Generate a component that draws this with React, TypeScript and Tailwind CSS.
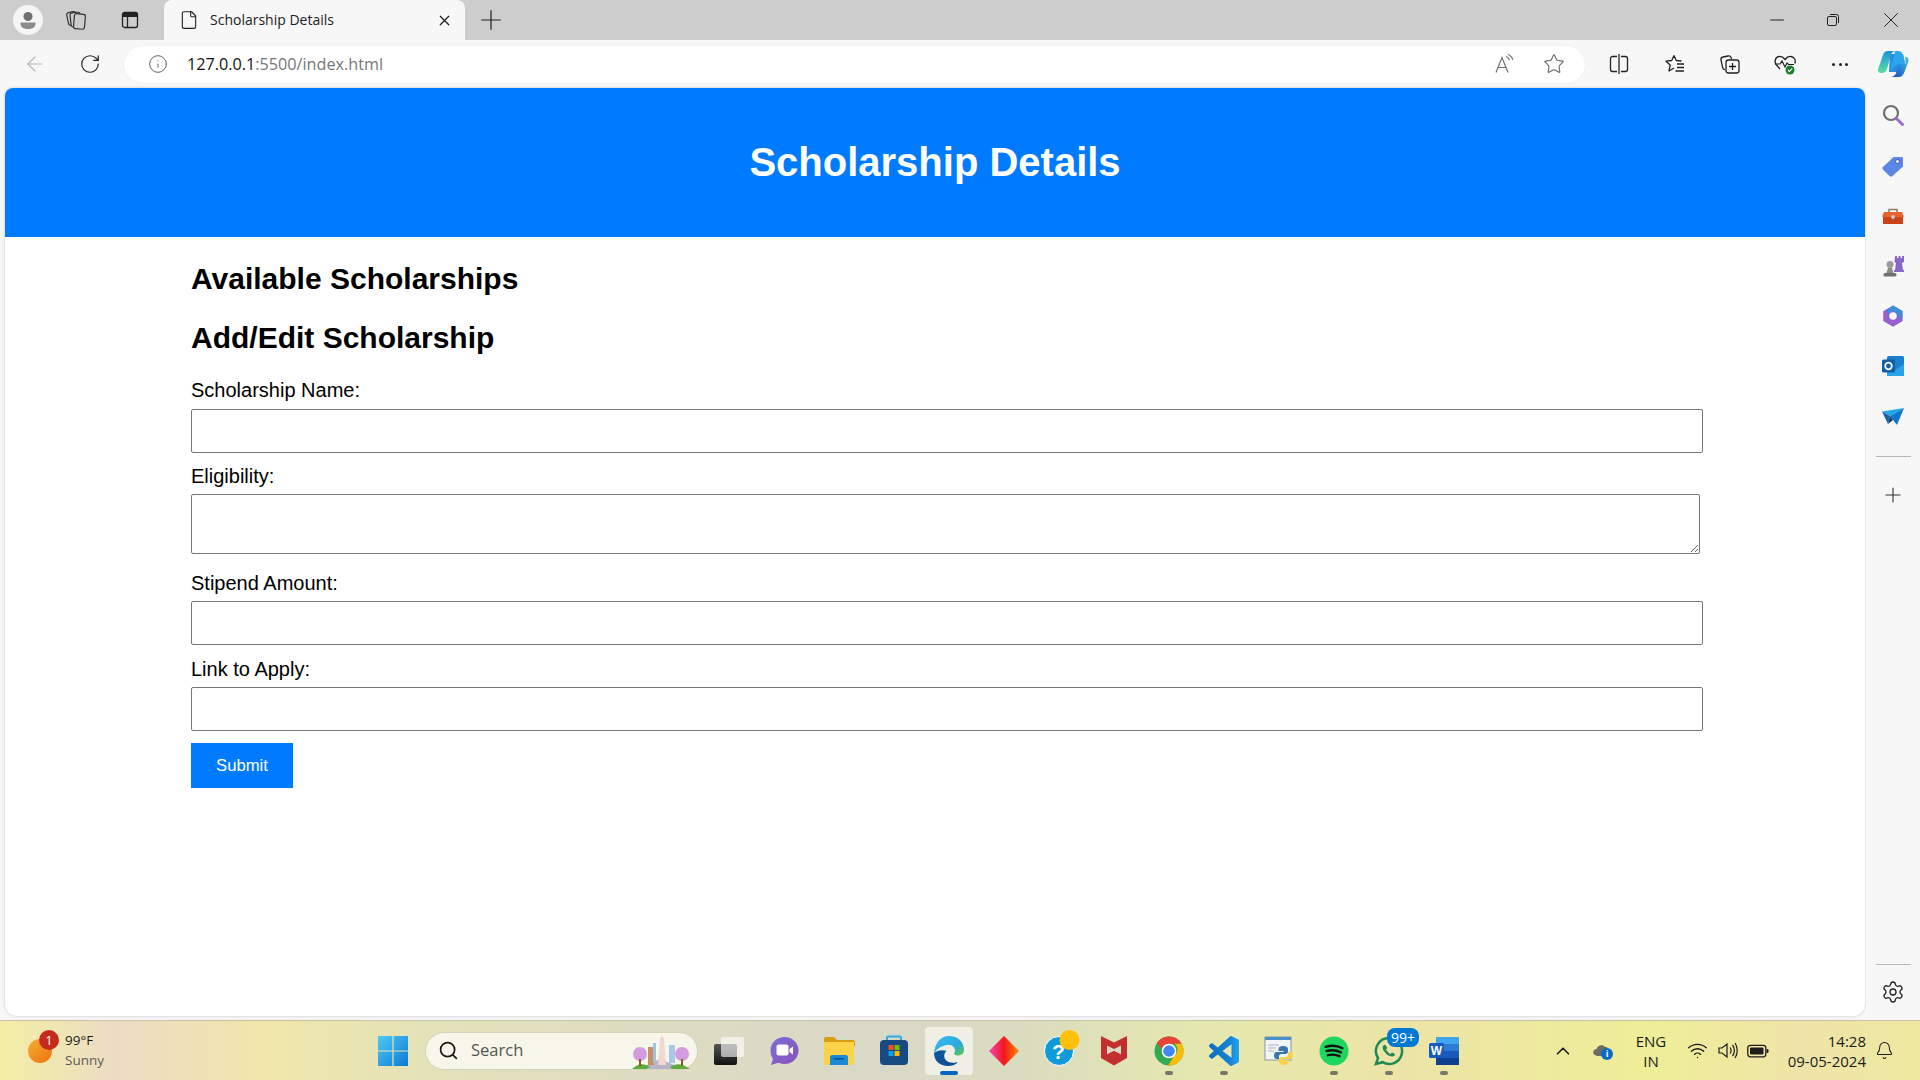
import React from "react";
import { ArrowLeft, RotateCw, Info, Star, X, Plus, Minus, File, Settings, ChevronUp, Bell, Wifi, Search } from "lucide-react";

const chrome = "font-['Open_Sans','Noto_Sans',sans-serif]";

function Profile() {
  return (
    <div className="w-[30px] h-[30px] rounded-full bg-[#f5f5f5] flex items-center justify-center">
      <svg width="22" height="22" viewBox="0 0 22 22"><circle cx="11" cy="7.5" r="4.5" fill="#6f6f6f" /><path d="M3.5 13.5h15v1.5c0 3-3.5 5-7.500 5s-7.500-2-7.500-5z" fill="#8b8b8b" /></svg>
    </div>
  );
}

function Workspaces() {
  return (
    <svg width="22" height="22" viewBox="0 0 22 22" fill="none" stroke="#333" strokeWidth="1.2"><rect x="1.500" y="3" width="9" height="13" rx="2" fill="#ccc" transform="rotate(-12 6 9)" /><rect x="4.500" y="3.500" width="10" height="14" rx="2" transform="rotate(-6 10 10)" fill="#ccc" /><rect x="8" y="5" width="11" height="15" rx="2" transform="rotate(5 14 12)" fill="#ccc" /></svg>
  );
}

function VerticalTabs() {
  return (
    <svg width="20" height="20" viewBox="0 0 20 20" fill="none"><rect x="2.500" y="2.500" width="15" height="15" rx="2" stroke="#222" strokeWidth="1.300" /><path d="M2.500 3h15v4h-15z" fill="#222" /><path d="M7.500 7v10" stroke="#222" strokeWidth="1.300" /></svg>
  );
}

function Restore() {
  return (
    <svg width="14" height="14" viewBox="0 0 14 14" fill="none" stroke="#222" strokeWidth="1"><rect x="1.500" y="3.500" width="9" height="9" rx="1.500" /><path d="M4 1.500h6.500a2 2 0 0 1 2 2V10" /></svg>
  );
}

function ReadAloud() {
  return (
    <svg width="22" height="22" viewBox="0 0 22 22" fill="none" stroke="#707070" strokeWidth="1.200"><path d="M2 19.500 8 4.500l6 15M4.200 14.500h7.600" /><path d="M12 3.500c2 .7 3 1.800 3.500 3.500M14 1.500c2.700 1 4.200 2.700 4.800 5.300" /></svg>
  );
}

function SplitScreen() {
  return (
    <svg width="22" height="22" viewBox="0 0 22 22" fill="none" stroke="#222" strokeWidth="1.300"><path d="M9 3.500H4.500a2 2 0 0 0-2 2v11a2 2 0 0 0 2 2H9M13 3.500h4.500a2 2 0 0 1 2 2v11a2 2 0 0 1-2 2H13M11 1v20" /></svg>
  );
}

function Favorites() {
  return (
    <svg width="22" height="22" viewBox="0 0 22 22" fill="none" stroke="#222" strokeWidth="1.300" strokeLinejoin="round"><path d="M10 2.500l2.300 5 5.200.5M10 2.500l-2.300 5-5.700.7 4.200 3.800-1.200 6 5-3" /><path d="M13 11h7M13 14.500h7M11.500 18h8.500" /></svg>
  );
}

function Collections() {
  return (
    <svg width="22" height="22" viewBox="0 0 22 22" fill="none" stroke="#222" strokeWidth="1.300"><path d="M6 16.500c-1 0-2-.5-2.300-1.700L2 7c-.3-1.500.5-2.700 2-3l5-1c1.500-.3 2.700.4 3.200 1.800l.3 1.200" /><rect x="7" y="7" width="13" height="13" rx="2.500" /><path d="M13.500 10v7M10 13.500h7" /></svg>
  );
}

function Health() {
  return (
    <svg width="24" height="24" viewBox="0 0 24 24" fill="none"><path d="M7 17 3.500 13C1 10 2 5 6 4.500c2.500-.3 4.500 1 6 3 1.500-2 3.500-3.300 6-3 3.500.5 5 4 3.800 7" stroke="#222" strokeWidth="1.300" /><path d="M2 12h5l2-3 3 6 2-4 1.500 1.500H21" stroke="#222" strokeWidth="1.200" /><circle cx="17" cy="18" r="4.500" fill="#1a7f2d" /><path d="M15 18l1.500 1.500 2.600-2.800" stroke="#fff" strokeWidth="1.200" /></svg>
  );
}

function Copilot() {
  return (
    <svg width="32" height="32" viewBox="0 0 32 32">
      <defs>
        <linearGradient id="cp1" x1="0" y1="0" x2="0" y2="1"><stop offset="0" stopColor="#1b8fe0" /><stop offset="1" stopColor="#5be0a0" /></linearGradient>
        <linearGradient id="cp3" x1="1" y1="0" x2="0" y2="1"><stop offset="0" stopColor="#3ec0f0" /><stop offset="1" stopColor="#1746b8" /></linearGradient>
      </defs>
      <path d="M13 6h13l2 10-4 8H12z" fill="#2a8ae0" />
      <path d="M11 3h8c-3 0-4.500 2-5 4L10 21c-.7 2.500-2.500 4-5 4H4c-2 0-3.500-1.500-3-3.500L6 7c.7-2.500 2.500-4 5-4z" fill="url(#cp1)" />
      <path d="M18 3h3c2.500 0 4 1.500 5 4l2 8c.3 1.500-1 1.500-2 1.500h-4c-3 0-5 1-6 4l-2 4c-.5-3 0-7 1.500-11l2-7c.3-1.500 0-2.500.5-3.500z" fill="#2aa6ec" />
      <path d="M28 9c2.500 0 4 1.500 3.500 4L27 25c-.8 2-2.500 4-5 4h-9c3 0 5-1.500 6-4l2-5c.5-2 2-3 4-3h1c2 0 3-1 2.500-4z" fill="url(#cp3)" />
    </svg>
  );
}

function Tab() {
  return (
    <div className="w-[301px] h-[40px] bg-[#f7f7f7] rounded-t-lg flex items-center pl-[15px] pr-[12px]">
      <File size={20} strokeWidth={1.300} className="text-[#222]" />
      <span className={`${chrome} ml-[11px] mb-[1px] text-[14px] text-[#222] flex-1`}>Scholarship Details</span>
      <X size={17} strokeWidth={1.800} className="text-[#222]" />
    </div>
  );
}

function TabStrip() {
  return (
    <div className="h-[40px] bg-[#cdcdcd] flex items-center">
      <div className="ml-[13px] w-[30px] flex justify-center"><Profile /></div>
      <div className="ml-[23px] w-[22px] flex"><Workspaces /></div>
      <div className="ml-[32px] w-[20px] flex"><VerticalTabs /></div>
      <div className="ml-[24px]"><Tab /></div>
      <Plus size={32} strokeWidth={0.900} className="ml-[10px] text-[#222]" />
      <div className="flex-1" />
      <Minus size={22} strokeWidth={1.100} className="text-[#222]" />
      <div className="ml-[38px] flex"><Restore /></div>
      <X size={26} strokeWidth={0.900} className="ml-[38px] mr-[16px] text-[#222]" />
    </div>
  );
}

function AddressBar() {
  return (
    <div className="h-[48px] bg-[#f7f7f7] flex items-center">
      <ArrowLeft size={24} strokeWidth={1.100} className="ml-[23px] text-[#b5b5b5]" />
      <RotateCw size={22} strokeWidth={1.300} className="ml-[32px] text-[#222]" />
      <div className="ml-[23px] w-[1461px] h-[37px] rounded-full bg-white flex items-center shadow-[0_0_2px_rgba(0,0,0,0.08)]">
        <Info size={20} strokeWidth={1.100} className="ml-[24px] text-[#555]" />
        <span className={`${chrome} ml-[19px] text-[16.200px] text-[#777]`}><span className="text-[#111]">127.0.0.1</span>:5500/index.html</span>
        <div className="flex-1" />
        <ReadAloud />
        <Star size={22} strokeWidth={1.200} className="ml-[27px] mr-[20px] text-[#666]" />
      </div>
      <div className="ml-[23px] flex"><SplitScreen /></div>
      <div className="ml-[34px] flex"><Favorites /></div>
      <div className="ml-[33px] flex"><Collections /></div>
      <div className="ml-[32px] flex"><Health /></div>
      <div className="ml-[35px] flex gap-[3.500px]">
        <span className="w-[3px] h-[3px] rounded-full bg-[#222]" /><span className="w-[3px] h-[3px] rounded-full bg-[#222]" /><span className="w-[3px] h-[3px] rounded-full bg-[#222]" />
      </div>
      <div className="ml-[29px] flex"><Copilot /></div>
    </div>
  );
}

function Field({ label, tall, labelGap, bottom }: { label: string; tall?: boolean; labelGap: string; bottom: string }) {
  return (
    <div className={bottom}>
      <label className={`block text-[20px] leading-[23px] text-black ${labelGap}`}>{label}</label>
      {tall ? (
        <textarea className="block w-[1509px] h-[60px] border-[1.500px] border-[#767676] rounded-[2px] bg-white resize-y" />
      ) : (
        <input type="text" className="block w-[1512px] h-[44px] border-[1.500px] border-[#767676] rounded-[2px] bg-white" />
      )}
    </div>
  );
}

function Page() {
  return (
    <div className="w-[1860px] h-[928px] ml-[5px] bg-white rounded-t-lg rounded-b-xl overflow-hidden font-['Liberation_Sans',Arial,sans-serif] shadow-[0_0_3px_rgba(0,0,0,0.2)]">
      <header className="h-[149px] bg-[#007bff] flex items-center justify-center pb-[1px]">
        <h1 className="text-[40px] font-bold text-white">Scholarship Details</h1>
      </header>
      <main className="pl-[186px] pt-[25px]">
        <h2 className="text-[30px] leading-[34px] font-bold text-black mb-[25px]">Available Scholarships</h2>
        <h2 className="text-[30px] leading-[34px] font-bold text-black mb-[24px]">Add/Edit Scholarship</h2>
        <Field label="Scholarship Name:" labelGap="mb-[7px]" bottom="mb-[12px]" />
        <Field label="Eligibility:" tall labelGap="mb-[6px]" bottom="mb-[18px]" />
        <Field label="Stipend Amount:" labelGap="mb-[6px]" bottom="mb-[13px]" />
        <Field label="Link to Apply:" labelGap="mb-[6px]" bottom="mb-[12px]" />
        <button className="w-[102px] h-[45px] bg-[#007bff] text-white text-[16.670px] block">Submit</button>
      </main>
    </div>
  );
}

function Tag() {
  return (<svg width="24" height="24" viewBox="0 0 24 24"><path d="M2 13 12.500 3h8c1 0 1.500.5 1.500 1.500v8L11.500 22c-1 1-2 1-3 0L2 15.500c-.7-.8-.7-1.700 0-2.500z" fill="#5b86e5" /><circle cx="16.500" cy="7.500" r="2" fill="#fff" stroke="#3552b0" /></svg>);
}
function Toolbox() {
  return (<svg width="24" height="24" viewBox="0 0 24 24"><path d="M8 7V4.500h8V7" fill="none" stroke="#8a7a70" strokeWidth="1.500" /><path d="M3 7h18l2 5H1z" fill="#e8622c" /><path d="M2 12h20v7H2z" fill="#c9431a" /><circle cx="12" cy="12" r="2" fill="#c8c8c8" /></svg>);
}
function Chess() {
  return (<svg width="24" height="24" viewBox="0 0 24 24"><circle cx="9" cy="10.500" r="3.500" fill="#9a9a9a" /><path d="M7 14h4l1.500 5h-7z" fill="#8a8a8a" /><rect x="2.500" y="19" width="13" height="3.500" rx="1.500" fill="#707070" /><path d="M14 2h2v2h1.500V2h2v2H21V2h2v6l-2 1 1 7h1v2H13v-2h1l1-7-1.500-1z" fill="#8a66c8" /></svg>);
}
function M365() {
  return (<svg width="24" height="24" viewBox="0 0 24 24"><path d="M12 1.500 21.500 7v10L12 22.500 2.500 17V7z" fill="#7a68d8" /><path d="M12 1.500 21.500 7v7l-5-3c-.5-2.500-2-3.500-4.500-3.500L7 10V5z" fill="#3f8fd8" /><path d="M2.500 7v10L12 22.500 21.500 17l-5-3-4.500 2.500L7 14V8z" fill="#9a5fd0" /><circle cx="12" cy="12" r="3.800" fill="#f7f7f7" /></svg>);
}
function Outlook() {
  return (<svg width="24" height="24" viewBox="0 0 24 24"><rect x="6" y="2" width="17" height="20" rx="1.500" fill="#1a7fd0" /><path d="M6 10l8.500 6L23 10v12H6z" fill="#2aa4e8" /><rect x="1" y="5.500" width="13" height="13" rx="1.500" fill="#0f5fa8" /><circle cx="7.500" cy="12" r="3.300" fill="none" stroke="#fff" strokeWidth="1.800" /></svg>);
}
function Send() {
  return (<svg width="24" height="24" viewBox="0 0 24 24"><path d="M1 6.500 23 3 9 11z" fill="#22a8ea" /><path d="M23 3 16 20 9 11z" fill="#1078c8" /><path d="M9 11l-2 8 5-4z" fill="#103a70" /><path d="M1 6.500 9 11l-2 8z" fill="#1560a8" /></svg>);
}

function Sidebar() {
  return (
    <div className="w-[54px] h-[928px] ml-[1px] flex flex-col items-center bg-[#f7f7f7]">
      <svg className="mt-[15px]" width="24" height="24" viewBox="0 0 24 24" fill="none"><circle cx="10" cy="10" r="7" stroke="#707070" strokeWidth="2.200" /><path d="M15.500 15.500l6 6" stroke="#9a6bd0" strokeWidth="3" strokeLinecap="round" /></svg>
      <div className="mt-[27px] flex"><Tag /></div>
      <div className="mt-[27px] flex"><Toolbox /></div>
      <div className="mt-[25px] flex"><Chess /></div>
      <div className="mt-[26px] flex"><M365 /></div>
      <div className="mt-[26px] flex"><Outlook /></div>
      <div className="mt-[27px] flex"><Send /></div>
      <div className="mt-[27px] w-[35px] h-px bg-[#b8b8b8]" />
      <Plus size={24} strokeWidth={1.100} className="mt-[26px] text-[#333]" />
      <div className="flex-1" />
      <div className="w-[35px] h-px bg-[#b8b8b8]" />
      <Settings size={24} strokeWidth={1.300} className="mt-[15px] mb-[12px] text-[#222]" />
    </div>
  );
}

function WinLogo() {
  return (
    <svg width="30" height="30" viewBox="0 0 30 30">
      <defs><linearGradient id="wl" x1="0" y1="0" x2="1" y2="1"><stop offset="0" stopColor="#4fcbf5" /><stop offset="1" stopColor="#0a78d4" /></linearGradient></defs>
      <path d="M0 0h14.400v14.400H0zM15.600 0H30v14.400H15.600zM0 15.600h14.400V30H0zM15.600 15.600H30V30H15.600z" fill="url(#wl)" />
    </svg>
  );
}

function City() {
  return (
    <svg width="62" height="34" viewBox="0 0 62 34">
      <path d="M8 34 L30 24 L54 34z" fill="#b8b4c8" />
      <path d="M2 34c6-6 12-6 18-2l-4 2zM40 32c6-4 12-4 20 2H42z" fill="#5eaa3c" />
      <path d="M28 30 30 4l2-4 2 4 2 26z" fill="#f0d8d0" />
      <rect x="18" y="12" width="6" height="18" fill="#c89060" /><rect x="23" y="8" width="3" height="20" fill="#9fc0e0" /><rect x="39" y="10" width="6" height="18" fill="#a8c8e8" />
      <circle cx="10" cy="19" r="7" fill="#d49be0" /><circle cx="52" cy="19" r="7" fill="#d49be0" />
      <rect x="9" y="24" width="2" height="7" fill="#8a5a20" /><rect x="51" y="24" width="2" height="7" fill="#8a5a20" />
    </svg>
  );
}

function TaskIcon({ children, active, dot }: { children: React.ReactNode; active?: boolean; dot?: boolean }) {
  return (
    <div className={`relative w-[48px] h-[48px] mr-[7px] flex items-center justify-center rounded-[4px] ${active ? "bg-[#f0efe6]" : ""}`}>
      {children}
      {active && <span className="absolute bottom-0 left-[15px] w-[18px] h-[4px] rounded-full bg-[#0067c0]" />}
      {dot && <span className="absolute bottom-0 left-[20px] w-[8px] h-[4px] rounded-full bg-[#77776a]" />}
    </div>
  );
}

const TaskView = () => (
  <svg width="32" height="30" viewBox="0 0 32 30">
    <defs><linearGradient id="tv" x1="0" y1="0" x2="0" y2="1"><stop offset="0" stopColor="#555" /><stop offset="1" stopColor="#111" /></linearGradient></defs>
    <rect x="1" y="8" width="23" height="21" rx="2" fill="url(#tv)" />
    <rect x="8" y="1" width="23" height="20" rx="2" fill="#ffffff" fillOpacity="0.62" />
  </svg>
);
const Teams = () => (<svg width="30" height="30" viewBox="0 0 30 30"><defs><linearGradient id="tm" x1="0" y1="0" x2="1" y2="1"><stop offset="0" stopColor="#7b6fd8" /><stop offset="1" stopColor="#8a50b8" /></linearGradient></defs><path d="M15.500 1C23.500 1 29.500 7 29.500 14.500S23.500 28 15.500 28c-2 0-4-.4-6-1.300L2 29l2-6C2.500 20.500 1.500 17.500 1.500 14.500 1.500 7 7.500 1 15.500 1z" fill="url(#tm)" /><rect x="7.500" y="8.500" width="12" height="11" rx="2" fill="#fff" /><path d="M20.500 13l3.500-2.500v8L20.500 16z" fill="#fff" /></svg>);
const Folder = () => (<svg width="32" height="30" viewBox="0 0 32 30"><path d="M1 3c0-1 .8-2 2-2h8l3 3h16c1 0 2 .8 2 2v4H1z" fill="#d89c10" /><path d="M1 6h30v21c0 1-1 2-2 2H3c-1 0-2-1-2-2z" fill="#fbd248" /><path d="M7 21c0-1 1-2 2-2h14c1 0 2 1 2 2v8H7z" fill="#1a8ad8" /><rect x="11" y="22" width="10" height="1.500" fill="#0a4f90" /></svg>);
const Store = () => (<svg width="30" height="31" viewBox="0 0 30 31"><path d="M8 7V3c0-1 .8-1.500 1.500-1.500h11c.7 0 1.500.5 1.500 1.500v4" fill="none" stroke="#2aa8e8" strokeWidth="2" /><rect x="1" y="5" width="28" height="25" rx="4" fill="#164a80" /><path d="M9.500 10H14.500v5H9.500z" fill="#f25022" /><path d="M15.500 10h5v5h-5z" fill="#7fba00" /><path d="M9.500 16h5v5h-5z" fill="#00a4ef" /><path d="M15.500 16h5v5h-5z" fill="#ffb900" /></svg>);
const Edge = () => (<svg width="32" height="32" viewBox="0 0 32 32"><defs><linearGradient id="eg" x1="0" y1="0" x2="1" y2="1"><stop offset="0" stopColor="#35c1f1" /><stop offset=".6" stopColor="#2aa8e0" /><stop offset="1" stopColor="#5ec93a" /></linearGradient><linearGradient id="eb" x1="0" y1="0" x2="1" y2="1"><stop offset="0" stopColor="#0c59a4" /><stop offset="1" stopColor="#114a8b" /></linearGradient></defs><path d="M16 1c9 0 15 6 15 14 0 3-1.500 5-5 5.500-3 .3-5.500-1-4.500-3 .5-1.200 1-3-.5-5-1.500-2-4-3-7-2.500C7 11 2.500 15 1 19 1.500 9 7 1 16 1z" fill="url(#eg)" /><path d="M1 18c0 8 6 13 14 13 4 0 7-1 9-3 .7-.7.3-1-.5-.7-4 1.200-9 .4-11-2.500-2-3-1.500-6.800 1-9-6-2-11 1-12.500 2.200z" fill="url(#eb)" /></svg>);
const Diamond = () => (<svg width="30" height="30" viewBox="0 0 30 30"><defs><linearGradient id="dm" x1="0" y1="0" x2="1" y2="0"><stop offset="0" stopColor="#f04bb0" /><stop offset=".5" stopColor="#f5141e" /><stop offset="1" stopColor="#ff8a00" /></linearGradient></defs><path d="M15 0 30 15 15 30 0 15z" fill="url(#dm)" /></svg>);
const HelpIcon = () => (
  <div className="relative w-[30px] h-[30px]">
    <svg className="absolute inset-0 overflow-visible" width="30" height="30" viewBox="0 0 30 30">
      <circle cx="15" cy="15" r="14.500" fill="#0f9ad8" stroke="#fff" strokeWidth="1" />
      <text x="14.500" y="23" textAnchor="middle" fontFamily="Liberation Sans" fontWeight="700" fontSize="21" fill="#fff">?</text>
      <circle cx="25.500" cy="4" r="10" fill="#ffc107" />
    </svg>
  </div>
);
const McAfee = () => (<svg width="28" height="31" viewBox="0 0 28 31"><path d="M1 1l13 6.500L27 1v22l-13 7.500L1 23z" fill="#c1302e" /><path d="M7 10.500l7 3.500 7-3.500v9l-7-3.500-7 3.500z" fill="#d9d8c6" /><path d="M7 19.500l7-3.500 7 3.500-7 4z" fill="#c1302e" /></svg>);
const Chrome = () => (<svg width="30" height="30" viewBox="0 0 32 32"><circle cx="16" cy="16" r="15.500" fill="#34a853" /><path d="M16 .5a15.500 15.500 0 0 1 13.500 7.800H16a7.800 7.800 0 0 0-7.300 5.200L3 7.500A15.500 15.500 0 0 1 16 .5z" fill="#ea4335" /><path d="M29.500 8.300A15.500 15.500 0 0 1 15 31.500l6.500-10.500a7.800 7.800 0 0 0 .5-12.700z" fill="#fbbc05" /><circle cx="16" cy="16" r="7.800" fill="#fff" /><circle cx="16" cy="16" r="6.200" fill="#4285f4" /></svg>);
const VSCode = () => (<svg width="30" height="30" viewBox="0 0 24 24"><defs><linearGradient id="vs" x1="0" y1="0" x2="1" y2="0"><stop offset="0" stopColor="#0b6fbd" /><stop offset=".7" stopColor="#1683d8" /><stop offset="1" stopColor="#24a4f0" /></linearGradient></defs><path d="M23.150 2.587 18.210.21a1.494 1.494 0 0 0-1.705.29l-9.460 8.630-4.120-3.128a.999.999 0 0 0-1.276.057L.327 7.261A1 1 0 0 0 .326 8.740L3.899 12 .326 15.260a1 1 0 0 0 .001 1.479L1.650 17.940a.999.999 0 0 0 1.276.057l4.120-3.128 9.460 8.630a1.492 1.492 0 0 0 1.704.290l4.942-2.377A1.500 1.500 0 0 0 24 20.060V3.939a1.500 1.500 0 0 0-.850-1.352zm-5.146 14.861L10.826 12l7.178-5.448v10.896z" fill="url(#vs)" /></svg>);
const PyIdle = () => (
  <svg width="30" height="30" viewBox="0 0 30 30">
    <rect x="1" y="1" width="26" height="23" fill="#f2f4f8" stroke="#8a95a5" />
    <rect x="1" y="1" width="26" height="3" fill="#4a90c8" />
    <path d="M4 9h11M4 12h8M4 15h6" stroke="#aab2c0" strokeWidth="1" />
    <path d="M19 10c-3 0-4.500 1-4.500 3v2h5v1h-7c-2 0-2.500 2-2.500 3.500s.5 3.500 2.500 3.500H15v-2.500c0-1.500 1-2.500 2.500-2.500h4c1.500 0 2.500-1 2.500-2.500V13c0-2-2-3-5-3z" fill="#3a78b0" />
    <path d="M20 29c3 0 4.500-1 4.500-3v-2h-5v-1h7c2 0 2.500-2 2.500-3.500S28.500 16 26.500 16H24v2.500c0 1.500-1 2.500-2.500 2.500h-4c-1.500 0-2.500 1-2.500 2.500V26c0 2 2 3 5 3z" fill="#f6d24a" />
  </svg>
);
const Spotify = () => (<svg width="30" height="30" viewBox="0 0 32 32"><circle cx="16" cy="16" r="15.500" fill="#1ed760" /><path d="M7 11.500c6-1.700 13-1.200 18 1.500M8 16c5-1.300 11-1 15.500 1.500M9.500 20.500c4-1 9-.8 12.500 1.200" stroke="#111" strokeWidth="2.500" strokeLinecap="round" fill="none" /></svg>);
const Whatsapp = () => (<svg width="32" height="32" viewBox="0 0 32 32" fill="none"><path d="M16 3a13 13 0 0 0-11 20L3 29l6.500-1.800A13 13 0 1 0 16 3z" stroke="#1f8a55" strokeWidth="2.500" /><path d="M11 10c-1.500 1-2 3 0 6 2 3 5 5.500 8 5.500 2 0 3-1 3-2.500l-3-1.500-1.500 1.500c-1.500-.5-3.500-2.500-4.500-4.500l1.300-1.500L12.500 10z" fill="#1f8a55" /></svg>);
const Word = () => (<svg width="30" height="30" viewBox="0 0 30 30"><rect x="7" y="1" width="23" height="7" fill="#41a5ee" /><rect x="7" y="8" width="23" height="7" fill="#2b7cd3" /><rect x="7" y="15" width="23" height="7" fill="#185abd" /><rect x="7" y="22" width="23" height="7" fill="#103f91" /><rect x="0" y="7" width="15" height="15" rx="1.500" fill="#185abd" /><text x="7.500" y="19" textAnchor="middle" fontFamily="Liberation Sans" fontWeight="700" fontSize="12" fill="#fff">W</text></svg>);

function Badge() {
  return <span className="absolute top-[1px] left-[22px] w-[32px] h-[19px] rounded-[8px] bg-[#0078d4] text-white text-[14px] leading-[19px] text-center font-['Open_Sans',sans-serif]">99+</span>;
}

function Taskbar() {
  return (
    <div className={`${chrome} relative h-[60px] mt-[4px] border-t border-[#c5c2a8] flex items-center bg-[linear-gradient(90deg,#f3eea4_0%,#ecdcc4_6%,#f1e7ab_14%,#e4e2b8_22%,#dfddc0_32%,#d8d8c8_46%,#dadcc0_53%,#e6e8ae_63%,#ece4a6_73%,#efee98_86%,#efe4a8_94%,#eee8a0_100%)]`}>
      <div className="relative ml-[28px] w-[24px] h-[24px] rounded-full bg-[linear-gradient(135deg,#f0b030,#f07010)]">
        <span className="absolute top-[-9px] left-[11px] w-[20px] h-[20px] rounded-full bg-[#c42b1c] text-white text-[13px] leading-[20px] text-center">1</span>
      </div>
      <div className="ml-[13px] w-[60px] mb-[2px]">
        <div className="text-[13.500px] leading-[20px] text-[#1c1c1c]">99°F</div>
        <div className="text-[13.500px] leading-[20px] text-[#5c5c5c]">Sunny</div>
      </div>
      <div className="ml-[253px] flex"><WinLogo /></div>
      <div className="ml-[17px] w-[273px] h-[38px] rounded-full bg-[#f6f6ea] border border-[#d4d3bb] flex items-center relative">
        <Search size={21} strokeWidth={2} className="ml-[12px] text-[#1c1c1c]" />
        <span className="ml-[12px] text-[16.500px] text-[#555]">Search</span>
        <div className="absolute right-[5px] top-[2px] flex"><City /></div>
      </div>
      <div className="ml-[7px] flex items-center">
        <TaskIcon><TaskView /></TaskIcon>
        <TaskIcon><Teams /></TaskIcon>
        <TaskIcon><Folder /></TaskIcon>
        <TaskIcon><Store /></TaskIcon>
        <TaskIcon active><Edge /></TaskIcon>
        <TaskIcon><Diamond /></TaskIcon>
        <TaskIcon><HelpIcon /></TaskIcon>
        <TaskIcon><McAfee /></TaskIcon>
        <TaskIcon dot><Chrome /></TaskIcon>
        <TaskIcon dot><VSCode /></TaskIcon>
        <TaskIcon><PyIdle /></TaskIcon>
        <TaskIcon dot><Spotify /></TaskIcon>
        <TaskIcon dot><Whatsapp /><Badge /></TaskIcon>
        <TaskIcon dot><Word /></TaskIcon>
      </div>
      <ChevronUp size={22} strokeWidth={1.800} className="ml-[77px] text-[#1c1c1c]" />
      <div className="relative ml-[18px] w-[22px] h-[18px]">
        <svg width="22" height="18" viewBox="0 0 22 18"><path d="M3 13c-3-1-2-6 1.500-6C5.500 3 11 2 13 5c3 0 4 2 3 5l-4 4H5z" fill="#6c6c66" /></svg>
        <span className="absolute top-[6px] left-[9px] w-[12px] h-[12px] rounded-full bg-[#0a6cc8] text-white text-[9px] leading-[12px] text-center font-bold">i</span>
      </div>
      <div className="ml-[22px] w-[30px] text-center text-[15px] leading-[20px] text-[#1c1c1c] whitespace-nowrap flex flex-col items-center"><span>ENG</span><span>IN</span></div>
      <Wifi size={21} strokeWidth={1.600} className="ml-[21px] text-[#1c1c1c]" />
      <svg className="ml-[9px]" width="21" height="21" viewBox="0 0 21 21" fill="none" stroke="#1c1c1c" strokeWidth="1.200"><path d="M2 8v5h3l5 4V4L5 8z" /><path d="M13 7.500c1.300 1.700 1.300 4.300 0 6M15.500 5c2.500 3 2.500 8 0 11M18 3c3 4 3 11 0 15" /></svg>
      <svg className="ml-[9px]" width="22" height="14" viewBox="0 0 22 14"><rect x=".8" y="1.300" width="18" height="11.500" rx="2.500" fill="none" stroke="#1c1c1c" strokeWidth="1.300" /><rect x="3" y="3.500" width="13.500" height="7" rx="1" fill="#1c1c1c" /><rect x="19.500" y="5" width="2" height="4" rx="1" fill="#1c1c1c" /></svg>
      <div className="ml-[13px] w-[84px] text-right text-[15px] leading-[20px] text-[#1c1c1c] whitespace-nowrap">14:28<br />09-05-2024</div>
      <Bell size={19} strokeWidth={1.300} className="ml-[9px] text-[#1c1c1c]" />
    </div>
  );
}

export default function App() {
  return (
    <div className="w-[1920px] h-[1080px] overflow-hidden bg-[#f7f7f7] flex flex-col">
      <TabStrip />
      <AddressBar />
      <div className="flex h-[928px]">
        <Page />
        <Sidebar />
      </div>
      <Taskbar />
    </div>
  );
}
